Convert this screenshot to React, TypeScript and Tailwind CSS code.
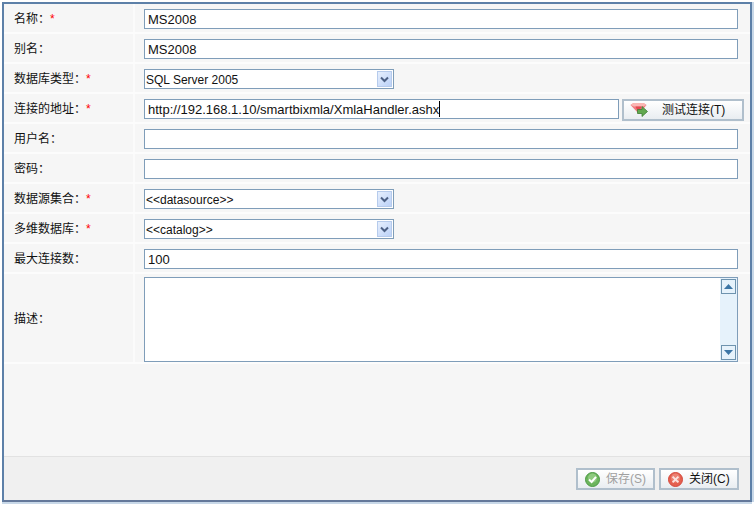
const FONT = "font-['Liberation_Sans','Noto_Sans_CJK_SC',sans-serif]";

const Row = ({
  label,
  required,
  className = "h-[30px]",
  children,
}: {
  label: string;
  required?: boolean;
  className?: string;
  children: React.ReactNode;
}) => (
  <div className={`flex border-b-2 border-[#fcfcfc] ${className}`}>
    <div className="flex w-[131px] shrink-0 items-center border-r-2 border-[#fbfbfb] pl-[10px] pt-[2px] text-[12px] leading-none text-[#111]">
      <span>{label}：</span>
      {required && <span className="text-[#f00]">*</span>}
    </div>
    <div className="flex min-w-0 flex-1 items-start gap-[3px] pl-[9px] pt-[5px]">{children}</div>
  </div>
);

const Input = ({ value, caret, width = "w-[594px]" }: { value?: string; caret?: boolean; width?: string }) => (
  <div
    className={`flex h-[20px] shrink-0 items-center border border-[#7f9db9] bg-white pl-[3px] text-[13px] leading-none text-[#111] ${width}`}
  >
    <span>{value}</span>
    {caret && <span className="h-[16px] w-px bg-black" />}
  </div>
);

const Select = ({ value }: { value: string }) => (
  <div className="flex h-[20px] w-[250px] items-center border border-[#7f9db9] bg-white pl-px pr-px">
    <span className="flex-1 pt-px text-[12px] leading-none text-[#111]">{value}</span>
    <span className="flex h-[16px] w-[15px] items-center justify-center border border-[#b6cbec] bg-[linear-gradient(135deg,#e6effd,#bcd2f8)]">
      <svg width="9" height="7" viewBox="0 0 9 7">
        <path d="M1 1.5 L4.5 5 L8 1.5" fill="none" stroke="#4d6185" strokeWidth="2" />
      </svg>
    </span>
  </div>
);

const GemIcon = () => (
  <svg width="18" height="14" viewBox="0 0 18 14">
    <path d="M0.5 2 L3.5 0 H13.5 L16.5 2 L9 11 Z" fill="#f07c80" />
    <path d="M0.5 2 L3.5 0 H13.5 L16.5 2 L13 3.5 H4 Z" fill="#fbb6b4" />
    <path d="M5.5 3.5 H11.5 L8.5 10 Z" fill="#e4474f" />
    <path d="M7.5 6.5 H12 V3.5 L17.5 8.5 L12 13.5 V10.5 H7.5 Z" fill="#62a84f" stroke="#3f7f35" strokeWidth="0.8" />
  </svg>
);

const CheckIcon = () => (
  <svg width="15" height="15" viewBox="0 0 15 15">
    <circle cx="7.5" cy="7.5" r="7" fill="#6cb45c" stroke="#4b9a45" />
    <circle cx="7.5" cy="6" r="4.5" fill="#a5d896" opacity="0.6" />
    <path d="M4 7.5 L6.6 10 L11 4.8" fill="none" stroke="#fff" strokeWidth="2" />
  </svg>
);

const CloseIcon = () => (
  <svg width="15" height="15" viewBox="0 0 15 15">
    <circle cx="7.5" cy="7.5" r="7" fill="#e4604f" stroke="#d4483c" />
    <circle cx="7.5" cy="6" r="4.5" fill="#f19a8c" opacity="0.6" />
    <path d="M4.6 4.6 L10.4 10.4 M10.4 4.6 L4.6 10.4" stroke="#fbe3df" strokeWidth="2" />
  </svg>
);

const Button = ({
  icon,
  label,
  hotkey,
  disabled,
  className,
}: {
  icon: React.ReactNode;
  label: string;
  hotkey: string;
  disabled?: boolean;
  className: string;
}) => (
  <div
    className={`flex items-center border-2 border-[#b0bfcc] bg-[linear-gradient(#ffffff,#e9edf1)] text-[12px] leading-none ${className} ${
      disabled ? "text-[#a0a0a0]" : "text-[#111]"
    }`}
  >
    {icon}
    <span>
      {label}({hotkey})
    </span>
  </div>
);

const ScrollButton = ({ up }: { up?: boolean }) => (
  <span className="flex h-[15px] w-[15px] items-center justify-center border border-[#6e93ae] bg-[#e6f2fb]">
    <svg width="9" height="5" viewBox="0 0 9 5">
      <path d={up ? "M4.5 0 L9 5 H0 Z" : "M0 0 H9 L4.5 5 Z"} fill="#3d76a6" />
    </svg>
  </span>
);

export default function App() {
  return (
    <div className={`h-[506px] w-[755px] overflow-hidden bg-white pl-[2px] pr-[3px] pt-[2px] ${FONT}`}>
      <div className="flex h-[500px] flex-col border-2 border-[#5d80a8] border-b-[#64789a] bg-[#f6f6f6] shadow-[0_2px_0_#c8d8e8,2px_0_0_#c8d8e8]">
        <div className="flex-1">
          <Row label="名称" required>
            <Input value="MS2008" />
          </Row>
          <Row label="别名">
            <Input value="MS2008" />
          </Row>
          <Row label="数据库类型" required>
            <Select value="SQL Server 2005" />
          </Row>
          <Row label="连接的地址" required>
            <Input value="http://192.168.1.10/smartbixmla/XmlaHandler.ashx" caret width="w-[475px]" />
            <Button
              icon={
                <span className="ml-[6px] mr-[14px] flex">
                  <GemIcon />
                </span>
              }
              label="测试连接"
              hotkey="T"
              className="h-[22px] w-[122px]"
            />
          </Row>
          <Row label="用户名">
            <Input />
          </Row>
          <Row label="密码">
            <Input />
          </Row>
          <Row label="数据源集合" required>
            <Select value="<<datasource>>" />
          </Row>
          <Row label="多维数据库" required>
            <Select value="<<catalog>>" />
          </Row>
          <Row label="最大连接数">
            <Input value="100" />
          </Row>
          <Row label="描述" className="h-[90px]">
            <div className="-mt-[2px] flex h-[85px] w-[594px] justify-end border border-[#7f9db9] bg-white">
              <div className="flex w-[17px] flex-col justify-between bg-[#e6f2fb] p-px">
                <ScrollButton up />
                <ScrollButton />
              </div>
            </div>
          </Row>
        </div>
        <div className="flex h-[44px] items-start justify-end gap-[4px] border-t border-[#e2e2e2] bg-[#f0f0f0] pr-[11px] pt-[11px]">
          <Button
            icon={
              <span className="ml-[7px] mr-[6px] flex">
                <CheckIcon />
              </span>
            }
            label="保存"
            hotkey="S"
            disabled
            className="h-[22px] w-[79px]"
          />
          <Button
            icon={
              <span className="ml-[7px] mr-[6px] flex">
                <CloseIcon />
              </span>
            }
            label="关闭"
            hotkey="C"
            className="h-[22px] w-[80px]"
          />
        </div>
      </div>
    </div>
  );
}
